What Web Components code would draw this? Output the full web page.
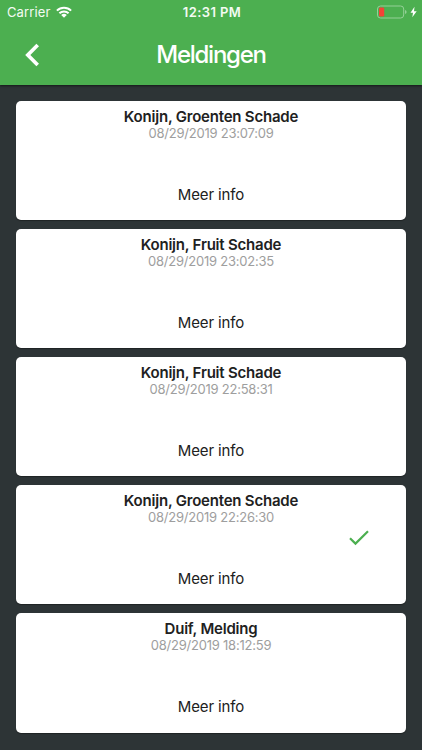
<!DOCTYPE html>
<html lang="nl"><head><meta charset="utf-8"><title>Meldingen</title>
<style>
html,body{margin:0;height:100%;overflow:hidden}
body{background:#2d3436;font-family:Inter,"Liberation Sans",sans-serif}
</style></head><body>
<meldingen-app></meldingen-app>
<script>
class StatusBar extends HTMLElement{
  constructor(){super();this.attachShadow({mode:"open"}).innerHTML=`<style>
  :host{display:grid;grid-template-columns:1fr auto 1fr;height:24px;align-items:center;color:#f3fbf3;line-height:24px;font-size:13px;padding:0 5px 0 7px}
  .left{display:flex;align-items:center;gap:6px;letter-spacing:.12px}
  .time{font-weight:600;font-size:13px;letter-spacing:.42px}
  .right{display:flex;justify-content:flex-end;align-items:center;gap:2px}
  svg{display:block}
  </style>
  <div class="left"><span>Carrier</span><svg width="16" height="12" viewBox="0 0 16 12" fill="none" stroke="#fff" stroke-width="2"><path d="M.9 4.6A10.2 10.2 0 0 1 15.1 4.6M3.4 7.3A6.5 6.5 0 0 1 12.6 7.3"/><path d="M5.2 9A4 4 0 0 1 10.8 9L8 11.8Z" fill="#fff" stroke="none"/></svg></div>
  <span class="time">12:31 PM</span>
  <div class="right"><svg width="31" height="14" viewBox="0 0 31 14"><rect x=".5" y="1" width="26.2" height="12" rx="3" fill="none" stroke="#94d097"/><rect x="2" y="2.5" width="5.2" height="9" rx="1.2" fill="#f44336"/><path d="M28.2 5v4Q29.5 8.4 29.5 7T28.2 5" fill="#a6d8a8"/></svg><svg width="7" height="12" viewBox="0 0 7 12"><path d="M4.5.8.5 6.8H3L2.3 11.2 6.7 5.2H4Z" fill="#fff"/></svg></div>`}
}
class AppHeader extends HTMLElement{
  constructor(){super();this.attachShadow({mode:"open"}).innerHTML=`<style>
  :host{display:grid;grid-template-rows:24px 61px;height:85px;background:#4caf50;box-shadow:0 1px 2px #0008;position:relative}
  .bar{display:grid;grid-template-columns:64px 1fr 64px;align-items:center}
  h1{margin:0;color:#fff;text-align:center;font-weight:500;font-size:24px;line-height:30px;letter-spacing:-1.25px}
  svg{display:block;margin-left:25px}
  </style><status-bar></status-bar><div class="bar"><svg width="14" height="24" viewBox="0 0 14 24"><path d="M12.7 2 2.8 12 12.7 22" stroke="#fff" stroke-width="3.7" fill="none"/></svg><h1><slot></slot></h1></div>`}
}
class MeldingCard extends HTMLElement{
  constructor(){super();this.attachShadow({mode:"open"}).innerHTML=`<style>
  :host{display:grid;grid-template-columns:95px 1fr 95px;height:119.2px;border-radius:5px;background:#fff;color:#212121;box-shadow:0 1px 1px #0005}
  .body{grid-column:2;display:flex;flex-direction:column;align-items:center;white-space:nowrap;padding-top:6px}
  .title{font-weight:600;font-size:15px;line-height:19px;letter-spacing:-.21px}
  .date{font-size:13px;line-height:14px;color:#9e9e9e;letter-spacing:-.22px}
  .more{font-size:15px;line-height:20px;margin-top:45px;letter-spacing:-.12px}
  .mark{grid-column:3;padding:43.4px 0 0 37px}
  svg{display:none}
  :host([checked]) svg{display:block}
  </style><div class="body"><span class="title"><slot></slot></span><span class="date"><slot name="date"></slot></span><span class="more">Meer info</span></div>
  <div class="mark"><svg width="22" height="18" viewBox="0 0 22 18"><path d="M2 9.2 7.5 14.6 20 2.2" fill="none" stroke="#4caf50" stroke-width="2.2"/></svg></div>`}
}
class MeldingenApp extends HTMLElement{
  constructor(){super();this.attachShadow({mode:"open"}).innerHTML=`<style>
  :host{display:block;height:750px;overflow:hidden}
  main{display:flex;flex-direction:column;gap:8.85px;padding:16.2px 16px}
  </style><app-header>Meldingen</app-header><main>
  <melding-card>Konijn, Groenten Schade<span slot="date">08/29/2019 23:07:09</span></melding-card>
  <melding-card>Konijn, Fruit Schade<span slot="date">08/29/2019 23:02:35</span></melding-card>
  <melding-card>Konijn, Fruit Schade<span slot="date">08/29/2019 22:58:31</span></melding-card>
  <melding-card checked>Konijn, Groenten Schade<span slot="date">08/29/2019 22:26:30</span></melding-card>
  <melding-card>Duif, Melding<span slot="date">08/29/2019 18:12:59</span></melding-card></main>`}
}
customElements.define("status-bar",StatusBar);
customElements.define("app-header",AppHeader);
customElements.define("melding-card",MeldingCard);
customElements.define("meldingen-app",MeldingenApp);
</script></body></html>
